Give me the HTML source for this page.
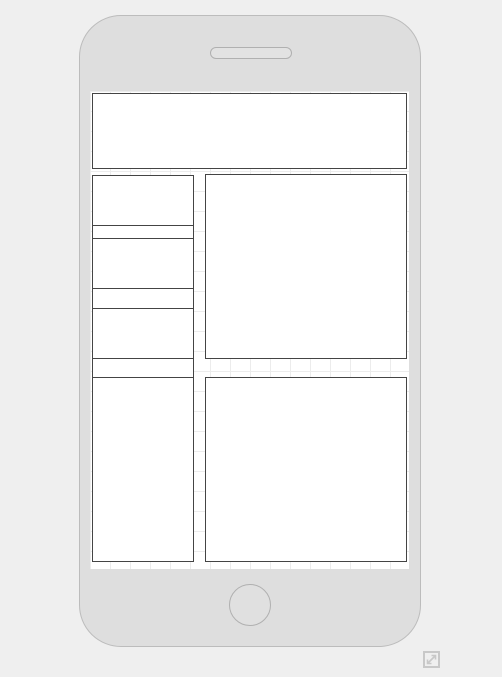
<!DOCTYPE html>
<html><head><meta charset="utf-8"><style>
html,body{margin:0;padding:0;width:502px;height:677px;background:#efefef;overflow:hidden;position:relative;font-family:"Liberation Sans",sans-serif}
.phone{position:absolute;left:79px;top:15px;width:340px;height:630px;background:#dedede;border:1px solid #bcbcbc;border-radius:42px}
.spk{position:absolute;left:210px;top:47px;width:80px;height:10px;border:1px solid #b0b0b0;border-radius:6px;background:#e2e2e2}
.home{position:absolute;left:229px;top:584px;width:40px;height:40px;border:1px solid #b0b0b0;border-radius:50%;background:#e0e0e0}
.screen{position:absolute;left:90px;top:91px;width:319px;height:478px;background-color:#fff;
background-image:linear-gradient(#ececec 1px,transparent 1px),linear-gradient(90deg,#ececec 1px,transparent 1px);
background-size:20px 20px;background-position:0 0}
.b{position:absolute;border:1px solid #444;background:#fff;box-sizing:border-box}
.ic{position:absolute;left:423px;top:651px;width:17px;height:17px;border:2px solid #c8c8c8;box-sizing:border-box}
</style></head><body>
<div class="phone"></div>
<div class="spk"></div>
<div class="home"></div>
<div class="screen"></div>
<div class="b" style="left:92px;top:93px;width:315px;height:76px"></div>
<div class="b" style="left:92px;top:175px;width:102px;height:51px"></div>
<div class="b" style="left:92px;top:225px;width:102px;height:14px"></div>
<div class="b" style="left:92px;top:238px;width:102px;height:51px"></div>
<div class="b" style="left:92px;top:288px;width:102px;height:21px"></div>
<div class="b" style="left:92px;top:308px;width:102px;height:51px"></div>
<div class="b" style="left:92px;top:358px;width:102px;height:20px"></div>
<div class="b" style="left:92px;top:377px;width:102px;height:185px"></div>
<div class="b" style="left:205px;top:174px;width:202px;height:185px"></div>
<div class="b" style="left:205px;top:377px;width:202px;height:185px"></div>
<div class="ic"><svg width="13" height="13" viewBox="0 0 13 13" style="position:absolute;left:0;top:0"><path d="M2.5 10.5L10.5 2.5M6.5 2.5H10.5V6.5M2.5 6.5V10.5H6.5" stroke="#c8c8c8" stroke-width="1.6" fill="none"/></svg></div>
</body></html>
